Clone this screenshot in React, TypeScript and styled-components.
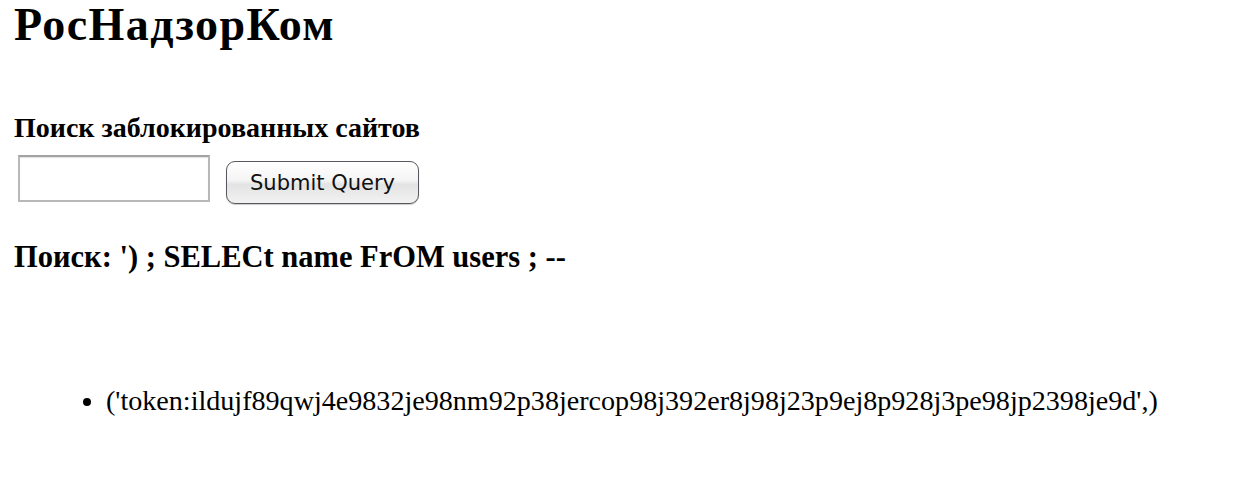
import React from "react";
import styled, { createGlobalStyle } from "styled-components";

const GlobalStyle = createGlobalStyle`
  html, body {
    margin: 0;
    padding: 0;
    background: #ffffff;
  }
  body {
    font-family: "Liberation Serif", "Times New Roman", serif;
    color: #000000;
  }
`;

const Page = styled.div`
  display: flex;
  flex-direction: column;
  align-items: flex-start;
  padding: 0 0 0 14px;
`;

const Title = styled.h1`
  margin: 0;
  font-size: 46px;
  line-height: 50px;
  letter-spacing: 1.4px;
  font-weight: bold;
`;

const SearchLabel = styled.h4`
  margin: 63px 0 0;
  font-size: 28px;
  line-height: 30px;
  font-weight: bold;
`;

const SearchForm = styled.form`
  display: flex;
  align-items: flex-start;
  gap: 16px;
  margin: 12px 0 0 4px;
`;

const SearchInput = styled.input`
  box-sizing: border-box;
  width: 192px;
  height: 47px;
  margin: 0;
  padding: 4px 6px;
  border: 2px solid #b8b8b8;
  border-top-color: #a2a2a2;
  background: #ffffff;
  box-shadow: inset 0 1px 1px rgba(0, 0, 0, 0.12);
  font-size: 20px;
  outline: none;
`;

const SubmitButton = styled.button`
  box-sizing: border-box;
  width: 193px;
  height: 43px;
  margin: 6px 0 0;
  padding: 0;
  border: 1.5px solid #55585c;
  border-radius: 9px;
  background: linear-gradient(#ffffff 0%, #f4f4f4 45%, #e3e3e3 55%, #f2f2f2 100%);
  box-shadow: 0 1px 1px rgba(0, 0, 0, 0.2);
  font-family: "DejaVu Sans", "Open Sans", sans-serif;
  font-size: 21px;
  color: #111111;
  cursor: pointer;
`;

const QueryEcho = styled.h3`
  margin: 36px 0 0;
  font-size: 30.5px;
  line-height: 34px;
  font-weight: bold;
`;

const ResultList = styled.ul`
  margin: 111px 0 0;
  padding: 0 0 0 92px;
  font-size: 28.1px;
  line-height: 32px;
`;

const ResultItem = styled.li`
  list-style: disc outside;
`;

export default function App() {
  return (
    <>
      <GlobalStyle />
      <Page>
        <Title>РосНадзорКом</Title>
        <SearchLabel>Поиск заблокированных сайтов</SearchLabel>
        <SearchForm onSubmit={(e) => e.preventDefault()}>
          <SearchInput type="text" />
          <SubmitButton type="submit">Submit Query</SubmitButton>
        </SearchForm>
        <QueryEcho>Поиск: ') ; SELECt name FrOM users ; --</QueryEcho>
        <ResultList>
          <ResultItem>
            ('token:ildujf89qwj4e9832je98nm92p38jercop98j392er8j98j23p9ej8p928j3pe98jp2398je9d',)
          </ResultItem>
        </ResultList>
      </Page>
    </>
  );
}
